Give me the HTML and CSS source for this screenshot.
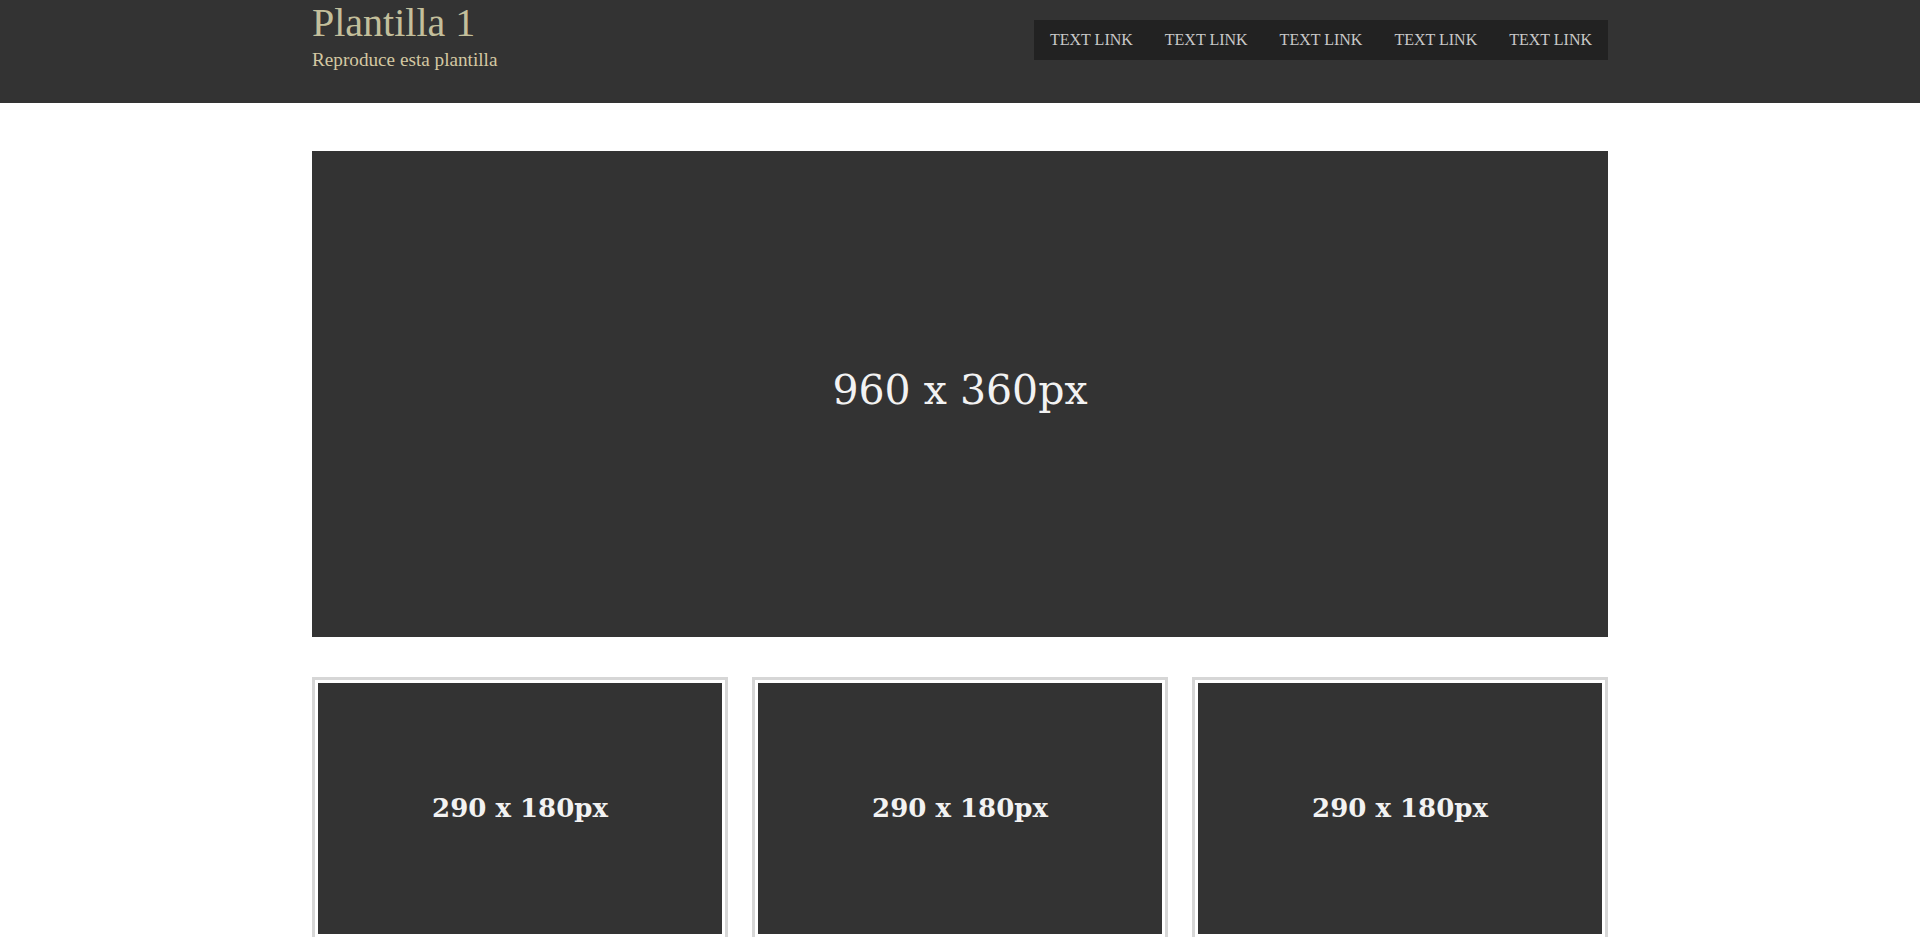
FILE: index.html
```html
<!DOCTYPE html>
<html lang="es">
<head>
<meta charset="utf-8">
<title>Plantilla 1</title>
<link rel="stylesheet" href="styles.css">
</head>
<body>
<header class="site-header">
  <div class="container header-inner">
    <div class="brand">
      <h1 class="brand-title">Plantilla 1</h1>
      <p class="brand-sub">Reproduce esta plantilla</p>
    </div>
    <nav class="main-nav">
      <a class="nav-link" href="#">TEXT LINK</a>
      <a class="nav-link" href="#">TEXT LINK</a>
      <a class="nav-link" href="#">TEXT LINK</a>
      <a class="nav-link" href="#">TEXT LINK</a>
      <a class="nav-link" href="#">TEXT LINK</a>
    </nav>
  </div>
</header>
<main class="container content">
  <div class="placeholder hero"><span class="ph-text hero-text">960 x 360px</span></div>
  <section class="cards">
    <div class="card"><div class="placeholder thumb"><span class="ph-text thumb-text">290 x 180px</span></div></div>
    <div class="card"><div class="placeholder thumb"><span class="ph-text thumb-text">290 x 180px</span></div></div>
    <div class="card"><div class="placeholder thumb"><span class="ph-text thumb-text">290 x 180px</span></div></div>
  </section>
</main>
</body>
</html>
```
FILE: styles.css
```css
html, body {
  margin: 0;
  padding: 0;
}
body {
  background: #ffffff;
  font-family: "Liberation Serif", "Times New Roman", serif;
}
.container {
  width: 1296px;
  margin: 0 auto;
}
.site-header {
  background: #333333;
  height: 103px;
}
.header-inner {
  display: flex;
  justify-content: space-between;
  align-items: flex-start;
}
.brand-title {
  margin: 0;
  font-weight: normal;
  font-size: 40px;
  line-height: 46px;
  color: #c3bf9b;
}
.brand-sub {
  margin: 3px 0 0;
  font-size: 19.2px;
  line-height: 22px;
  color: #d3c8a2;
}
.main-nav {
  margin-top: 20px;
  display: flex;
  background: #222222;
}
.nav-link {
  display: block;
  padding: 11px 16px;
  font-size: 16px;
  line-height: 18px;
  color: #c9c9c9;
  text-decoration: none;
}
.content {
  padding-top: 48px;
}
.placeholder {
  background: #333333;
  display: flex;
  align-items: center;
  justify-content: center;
}
.ph-text {
  font-family: "DejaVu Serif", "Liberation Serif", serif;
  color: #f2f2f2;
}
.hero {
  height: 486px;
  box-sizing: border-box;
  padding-bottom: 8px;
}
.hero-text {
  font-size: 41px;
}
.cards {
  margin-top: 40px;
  display: grid;
  grid-template-columns: repeat(3, 1fr);
  gap: 24px;
}
.card {
  border: 3px solid #d6d6d6;
  padding: 3px;
}
.thumb {
  aspect-ratio: 290 / 180;
}
.thumb-text {
  font-size: 26px;
  font-weight: bold;
}
```
